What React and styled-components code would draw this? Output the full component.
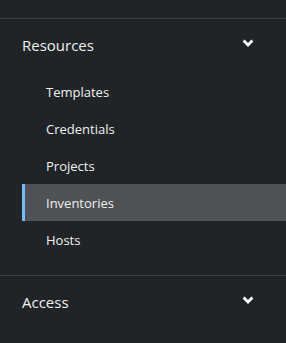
import React from 'react';
import styled, { createGlobalStyle } from 'styled-components';

const GlobalStyle = createGlobalStyle`
  html, body {
    margin: 0;
    padding: 0;
    background: #212427;
  }
  body {
    font-family: "Open Sans", "Noto Sans", sans-serif;
  }
`;

const Nav = styled.nav`
  width: 286px;
  height: 343px;
  background-color: #212427;
  padding-top: 18px;
  box-sizing: border-box;
  overflow: hidden;
`;

const Section = styled.section`
  border-top: 1px solid #3c3f42;
  padding: 14px 0 17px;
`;

const SectionHeader = styled.button`
  display: flex;
  align-items: center;
  justify-content: space-between;
  width: 100%;
  height: 24px;
  padding: 0 32px 0 22px;
  border: 0;
  background: none;
  color: #f0f0f0;
  font-family: inherit;
  font-size: 15px;
  cursor: pointer;
`;

const Chevron = styled.svg`
  width: 12px;
  height: 9px;
  margin-top: -3px;
  fill: #ffffff;
`;

const ItemList = styled.ul`
  list-style: none;
  margin: 16px 0 0 22px;
  padding: 0;
`;

const Item = styled.li`
  display: flex;
  align-items: center;
  height: 37px;
  padding-left: 21px;
  box-sizing: border-box;
  color: #f0f0f0;
  font-size: 13px;
  cursor: pointer;
  background-color: ${props => (props.active ? '#4f5255' : 'transparent')};
  border-left: 3px solid ${props => (props.active ? '#73bcf7' : 'transparent')};
`;

const AngleDown = () => (
  <Chevron viewBox="0 0 12 9">
    <path d="M0.6 2.6 L2.6 0.6 L6 4 L9.4 0.6 L11.4 2.6 L6 8 Z" />
  </Chevron>
);

const resources = ['Templates', 'Credentials', 'Projects', 'Inventories', 'Hosts'];

export default function App() {
  return (
    <>
      <GlobalStyle />
      <Nav>
        <Section>
          <SectionHeader>
            Resources
            <AngleDown />
          </SectionHeader>
          <ItemList>
            {resources.map(name => (
              <Item key={name} active={name === 'Inventories'}>
                {name}
              </Item>
            ))}
          </ItemList>
        </Section>
        <Section>
          <SectionHeader>
            Access
            <AngleDown />
          </SectionHeader>
        </Section>
      </Nav>
    </>
  );
}
